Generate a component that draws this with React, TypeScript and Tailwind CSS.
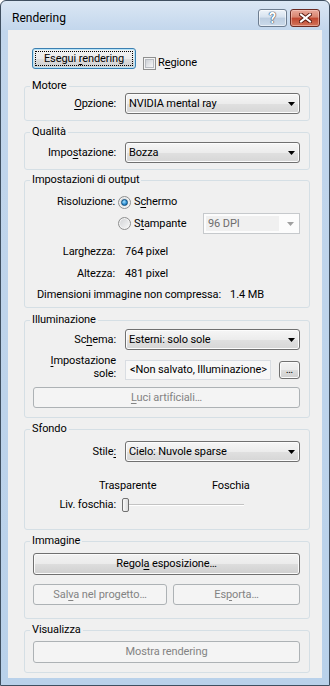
import type { ReactNode } from 'react';

// Win7-style "Rendering" dialog (Aero frame, group boxes, combo boxes)

const BTN =
  'flex items-center justify-center rounded-[3px] border border-[#707070] bg-[linear-gradient(#f2f2f2_0%,#ebebeb_50%,#dddddd_51%,#cfcfcf_100%)] shadow-[inset_0_0_0_1px_#fbfbfb]';
const BTN_OFF =
  'flex items-center justify-center rounded-[3px] border border-[#adb2b5] bg-[#f4f4f4] text-[#838383]';

const U = ({ children }: { children: ReactNode }) => (
  <span className="underline decoration-1 underline-offset-[2px]">{children}</span>
);

const Arrow = ({ color = '#000' }: { color?: string }) => (
  <svg width="7" height="4" viewBox="0 0 7 4" className="shrink-0">
    <path d="M0 0h7L3.5 4z" fill={color} />
  </svg>
);

const Combo = ({ children }: { children: ReactNode }) => (
  <div className="ml-[9px] w-[175px] h-[21px] flex items-center rounded-[3px] border border-[#707070] bg-[linear-gradient(#f6f6f6_0%,#ececec_50%,#e0e0e0_51%,#d6d6d6_100%)] shadow-[inset_0_0_0_1px_#fcfcfc] pl-[3px] pr-[4px]">
    <span className="flex-1 whitespace-nowrap">{children}</span>
    <Arrow />
  </div>
);

const Label = ({ children }: { children: ReactNode }) => (
  <span className="w-[91px] shrink-0 text-right whitespace-nowrap">{children}</span>
);

const Radio = ({ on = false, className = '' }: { on?: boolean; className?: string }) => (
  <span
    className={`w-[13px] h-[13px] shrink-0 rounded-full border border-[#8e8f8f] bg-[linear-gradient(135deg,#cfd1d4,#f9f9f9)] shadow-[inset_0_0_0_1px_#f4f4f4] flex items-center justify-center ${className}`}
  >
    {on && (
      <span className="w-[7px] h-[7px] rounded-full border border-[#0e4e7c] bg-[radial-gradient(circle_at_40%_35%,#a6e3ff,#2a8ad0_60%,#0f5d96)]" />
    )}
  </span>
);

const Group = ({
  title,
  className,
  children,
}: {
  title: string;
  className: string;
  children: ReactNode;
}) => (
  <fieldset className={`min-w-0 border border-[#d5dfe5] rounded-[3px] ${className}`}>
    <legend className="ml-[5px] px-[2px] leading-[14px]">{title}</legend>
    {children}
  </fieldset>
);

export default function App() {
  return (
    <div className="w-[330px] h-[686px] flex flex-col border border-[#3f4f60] rounded-t-[6px] bg-[linear-gradient(#dbe7f4,#c2d6ec_30px,#b9d1ea)] font-['Roboto',sans-serif] text-[11px] tracking-[-0.1px] leading-[16px] text-black overflow-hidden">
      {/* Title bar */}
      <div className="h-[29px] shrink-0 flex items-start justify-between pl-[11px] pr-[9px]">
        <span className="pt-[9px] text-[12px] tracking-normal leading-[16px]">Rendering</span>
        <div className="flex gap-[3px] mt-[8px]">
          <div className="w-[29px] h-[18px] rounded-[3px] border border-[#6d7d90] bg-[linear-gradient(#eef3f9,#d6e2ef_45%,#bccde0_50%,#cbdaea)] shadow-[inset_0_0_0_1px_rgba(255,255,255,0.55)] flex items-center justify-center">
            <span className="text-white font-bold text-[14px] leading-none [text-shadow:0_0_1px_#33455c,0_0_1px_#33455c,0_0_1px_#33455c]">
              ?
            </span>
          </div>
          <div className="w-[30px] h-[18px] rounded-[3px] border border-[#6a2a22] bg-[linear-gradient(#e9a99a,#d8846f_45%,#c0462f_50%,#d2745b)] shadow-[inset_0_0_0_1px_rgba(255,220,210,0.45)] flex items-center justify-center">
            <svg width="13" height="10" viewBox="0 0 13 10">
              <path d="M2 1.5l9 7M11 1.5l-9 7" stroke="#5a1c12" strokeWidth="4" strokeLinecap="square" />
              <path d="M2 1.5l9 7M11 1.5l-9 7" stroke="#fff" strokeWidth="2" strokeLinecap="square" />
            </svg>
          </div>
        </div>
      </div>

      {/* Client area */}
      <div className="flex-1 mx-[7px] mb-[7px] bg-[#f0f0f0] flex flex-col pl-[16px] pr-[12px]">
        <div className="mt-[18px] ml-[8px] flex items-start">
          <button className="w-[104px] h-[21px] flex rounded-[3px] border border-[#3c7fb1] bg-[linear-gradient(#f2f2f2_0%,#ebebeb_50%,#dddddd_51%,#cfcfcf_100%)] shadow-[inset_0_0_0_1px_#b8e4f8]">
            <span className="flex-1 m-[2px] flex items-center justify-center border border-dotted border-black">
              <span>
                Esegui <U>r</U>endering
              </span>
            </span>
          </button>
          <div className="ml-[7px] mt-[7px] flex items-center">
            <span className="w-[13px] h-[13px] border border-[#8e8f8f] bg-[#f4f4f4] flex items-center justify-center">
              <span className="w-[9px] h-[9px] border border-[#b8bcc2] bg-[linear-gradient(135deg,#cdd1d6,#f7f7f8)]" />
            </span>
            <span className="ml-[2px]">
              R<U>e</U>gione
            </span>
          </div>
        </div>

        <Group title="Motore" className="mt-[8px] h-[42px]">
          <div className="flex items-center">
            <Label>
              <U>O</U>pzione:
            </Label>
            <Combo>NVIDIA mental ray</Combo>
          </div>
        </Group>

        <Group title="Qualità" className="mt-[4px] h-[45px]">
          <div className="mt-[3px] flex items-center">
            <Label>
              Impo<U>s</U>tazione:
            </Label>
            <Combo>Bozza</Combo>
          </div>
        </Group>

        <Group title="Impostazioni di output" className="mt-[3px] h-[135px]">
          <div className="mt-[7px] h-[16px] flex items-center">
            <span className="w-[90px] shrink-0 text-right">Risoluzione:</span>
            <Radio on className="ml-[3px]" />
            <span className="ml-[3px]">
              S<U>c</U>hermo
            </span>
          </div>
          <div className="mt-[3px] h-[21px] flex items-center">
            <Radio className="ml-[93px]" />
            <span className="ml-[3px] w-[69px]">
              S<U>t</U>ampante
            </span>
            <div className="w-[97px] h-[21px] flex items-center border border-[#c6c9cc] bg-[#fcfcfc] pr-[5px]">
              <span className="m-[2px] flex-1 h-[15px] flex items-center bg-[#f0f0f0] pl-[2px] text-[#6d6d6d]">
                96 DPI
              </span>
              <span className="ml-[6px]">
                <Arrow color="#a0a0a0" />
              </span>
            </div>
          </div>
          <div className="mt-[10px] h-[16px] flex items-center">
            <span className="w-[90px] shrink-0 text-right">Larghezza:</span>
            <span className="ml-[10px]">764 pixel</span>
          </div>
          <div className="mt-[6px] h-[16px] flex items-center">
            <span className="w-[90px] shrink-0 text-right">Altezza:</span>
            <span className="ml-[10px]">481 pixel</span>
          </div>
          <div className="mt-[5px] h-[16px] flex items-center pl-[12px]">
            <span className="shrink-0 whitespace-nowrap">Dimensioni immagine non compressa:</span>
            <span className="ml-[9px]">1.4 MB</span>
          </div>
        </Group>

        <Group title="Illuminazione" className="mt-[5px] h-[105px]">
          <div className="mt-[2px] flex items-center">
            <Label>
              Sc<U>h</U>ema:
            </Label>
            <Combo>Esterni: solo sole</Combo>
          </div>
          <div className="mt-[4px] flex items-start">
            <span className="w-[91px] shrink-0 text-right leading-[13px]">
              <U>I</U>mpostazione
              <br />
              sole:
            </span>
            <div className="ml-[9px] mt-[6px] w-[146px] h-[20px] flex items-center overflow-hidden whitespace-nowrap border border-[#d9dde2] bg-[#f7f7f7] pl-[4px]">
              &lt;Non salvato, Illuminazione&gt;
            </div>
            <button className={`ml-[8px] mt-[7px] w-[21px] h-[18px] ${BTN}`}>…</button>
          </div>
          <button disabled className={`mt-[7px] ml-[8px] w-[267px] h-[21px] ${BTN_OFF}`}>
            <span>
              <U>L</U>uci artificiali…
            </span>
          </button>
        </Group>

        <Group title="Sfondo" className="mt-[4px] h-[108px]">
          <div className="mt-[5px] flex items-center">
            <Label>
              Stile<U>:</U>
            </Label>
            <Combo>Cielo: Nuvole sparse</Combo>
          </div>
          <div className="mt-[16px] h-[16px] flex items-center pl-[74px]">
            <span className="w-[113px]">Trasparente</span>
            <span>Foschia</span>
          </div>
          <div className="mt-[4px] h-[14px] flex items-center">
            <Label>Liv. foschia:</Label>
            <div className="relative ml-[6px] w-[122px] h-[14px]">
              <div className="absolute left-[3px] right-0 top-[6px] h-[2px] border-t border-[#c3c3c3] border-b border-b-white" />
              <div className="absolute left-0 top-0 w-[7px] h-[14px] rounded-[2px] border border-[#707070] bg-[linear-gradient(90deg,#fafafa,#dcdcdc)]" />
            </div>
          </div>
        </Group>

        <Group title="Immagine" className="mt-[4px] h-[85px]">
          <button className={`mt-[5px] ml-[8px] w-[267px] h-[22px] ${BTN}`}>
            <span>
              Regol<U>a</U> esposizione…
            </span>
          </button>
          <div className="mt-[9px] ml-[8px] flex gap-[6px]">
            <button disabled className={`w-[134px] h-[21px] ${BTN_OFF}`}>
              <span>
                Sal<U>v</U>a nel progetto…
              </span>
            </button>
            <button disabled className={`w-[127px] h-[21px] ${BTN_OFF}`}>
              <span>
                Es<U>p</U>orta…
              </span>
            </button>
          </div>
        </Group>

        <Group title="Visualizza" className="mt-[4px] h-[50px]">
          <button disabled className={`mt-[4px] ml-[8px] w-[267px] h-[22px] ${BTN_OFF}`}>
            Mostra rendering
          </button>
        </Group>
      </div>
    </div>
  );
}
